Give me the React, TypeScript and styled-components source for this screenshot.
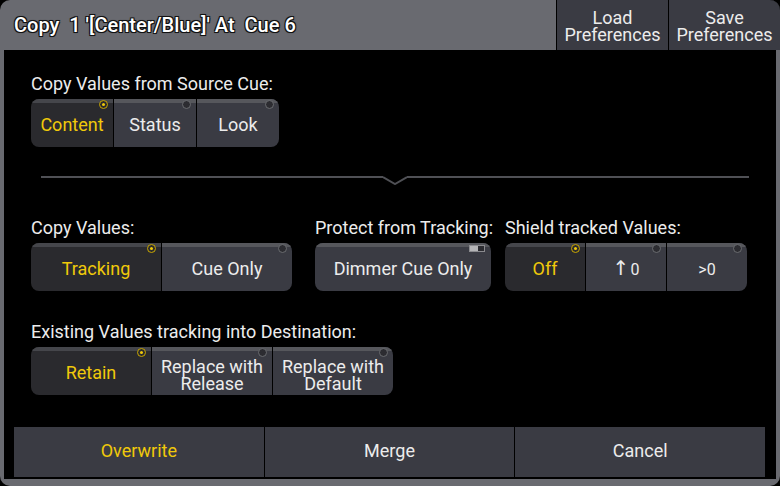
import React, { useState } from "react";
import styled, { createGlobalStyle } from "styled-components";

const YELLOW = "#f0c90a";

const GlobalStyle = createGlobalStyle`
  * {
    box-sizing: border-box;
  }
  html,
  body {
    margin: 0;
    padding: 0;
    background: #000;
    font-family: Roboto, "Liberation Sans", sans-serif;
    color: #ececec;
  }
`;

const Frame = styled.div`
  width: 780px;
  height: 486px;
  background: #696a70;
  border-radius: 10px;
  overflow: hidden;
  display: flex;
  flex-direction: column;
`;

const TitleBar = styled.div`
  height: 50px;
  display: flex;
  align-items: stretch;
  flex-shrink: 0;
`;

const Title = styled.div`
  flex: 1;
  padding-left: 14px;
  padding-bottom: 1px;
  display: flex;
  align-items: center;
  font-size: 20px;
  font-weight: 500;
  white-space: pre;
  color: #fff;
  text-shadow:
    -1px -1px 0 #111,
    1px -1px 0 #111,
    -1px 1px 0 #111,
    1px 1px 0 #111,
    0 0 2px #000;
`;

const TitleButtons = styled.div`
  display: flex;
  gap: 1px;
  background: #000;
  padding-left: 1px;
`;

const TitleButton = styled.div`
  width: 111px;
  background: #3a3b43;
  display: flex;
  align-items: center;
  justify-content: center;
  text-align: center;
  font-size: 18px;
  line-height: 17px;
  padding-top: 1px;
`;

const Body = styled.div`
  flex: 1;
  margin: 0 4px 7px;
  background: #000;
  display: flex;
  flex-direction: column;
`;

const Content = styled.div`
  padding: 24px 27px 0 27px;
  display: flex;
  flex-direction: column;
`;

const Field = styled.div<{ $width?: number }>`
  display: flex;
  flex-direction: column;
  width: ${p => (p.$width ? `${p.$width}px` : "auto")};
`;

const Label = styled.div`
  font-size: 18px;
  line-height: 20px;
  height: 20px;
  margin-bottom: 5px;
  white-space: nowrap;
`;

const Group = styled.div`
  display: flex;
  gap: 1px;
  background: #000;
  border-radius: 8px;
  overflow: hidden;
  align-self: flex-start;
`;

const Option = styled.div<{ $active: boolean; $width: number }>`
  position: relative;
  width: ${p => p.$width}px;
  height: 48px;
  background: ${p => (p.$active ? "#2a2a2e" : "#3a3b43")};
  box-shadow: inset 0 4px 0 ${p => (p.$active ? "#45464b" : "#56575c")};
  color: ${p => (p.$active ? YELLOW : "#ececec")};
  display: flex;
  align-items: center;
  justify-content: center;
  text-align: center;
  font-size: 18px;
  line-height: 17px;
  padding-top: 3px;
  cursor: pointer;
`;

const TwoLine = styled.span`
  display: block;
  padding-top: 5px;
`;

const Small = styled.span`
  font-size: 16px;
  padding-top: 2px;
  display: inline-flex;
  align-items: baseline;
`;

const Arrow = styled.span`
  font-family: "DejaVu Sans", sans-serif;
  font-size: 20px;
  line-height: 0;
  margin-right: 1px;
`;

const Radio = styled.span<{ $active: boolean }>`
  position: absolute;
  top: 1px;
  right: 5px;
  width: 9px;
  height: 9px;
  border-radius: 50%;
  border: 1.5px solid ${p => (p.$active ? "#c9a700" : "#6b6c71")};
  background: ${p => (p.$active ? "#2a2a2e" : "#2c2c31")};
  display: flex;
  align-items: center;
  justify-content: center;
  &::after {
    content: "";
    display: ${p => (p.$active ? "block" : "none")};
    width: 3px;
    height: 3px;
    border-radius: 50%;
    background: ${YELLOW};
  }
`;

const Toggle = styled.span`
  position: absolute;
  top: 2px;
  right: 6px;
  width: 16px;
  height: 7px;
  background: #b4b4b6;
  border: 1px solid #8a8a8e;
  display: flex;
  justify-content: flex-end;
  &::after {
    content: "";
    width: 6px;
    height: 100%;
    background: #2b2b30;
  }
`;

const DividerRow = styled.div`
  display: flex;
  align-items: flex-start;
  margin: 29px 0 0 10px;
  height: 8px;
`;

const DividerLine = styled.div`
  flex: 1;
  height: 2px;
  background: #4f5055;
`;

const Row = styled.div<{ $top: number }>`
  display: flex;
  margin-top: ${p => p.$top}px;
`;

const BottomBar = styled.div`
  margin: auto 11px 2px 10px;
  height: 50px;
  display: flex;
  gap: 1px;
  background: #000;
`;

const BottomButton = styled.div<{ $accent?: boolean }>`
  flex: 1;
  background: #3a3b43;
  color: ${p => (p.$accent ? YELLOW : "#ececec")};
  display: flex;
  align-items: center;
  justify-content: center;
  font-size: 18px;
  padding-bottom: 3px;
`;

type Opt = { id: string; label: React.ReactNode };

function OptionGroup({
  options,
  selected,
  width,
  onSelect
}: {
  options: Opt[];
  selected: string;
  width: number;
  onSelect: (id: string) => void;
}) {
  return (
    <Group>
      {options.map(o => (
        <Option
          key={o.id}
          $active={o.id === selected}
          $width={width}
          onClick={() => onSelect(o.id)}
        >
          <Radio $active={o.id === selected} />
          {o.label}
        </Option>
      ))}
    </Group>
  );
}

function App() {
  const [source, setSource] = useState("content");
  const [copyMode, setCopyMode] = useState("tracking");
  const [shield, setShield] = useState("off");
  const [existing, setExisting] = useState("retain");

  return (
    <>
      <GlobalStyle />
      <Frame>
        <TitleBar>
          <Title>{"Copy  1 '[Center/Blue]' At  Cue 6"}</Title>
          <TitleButtons>
            <TitleButton>
              Load
              <br />
              Preferences
            </TitleButton>
            <TitleButton>
              Save
              <br />
              Preferences
            </TitleButton>
          </TitleButtons>
        </TitleBar>
        <Body>
          <Content>
            <Field>
              <Label>Copy Values from Source Cue:</Label>
              <OptionGroup
                width={82}
                selected={source}
                onSelect={setSource}
                options={[
                  { id: "content", label: "Content" },
                  { id: "status", label: "Status" },
                  { id: "look", label: "Look" }
                ]}
              />
            </Field>

            <DividerRow>
              <DividerLine />
              <svg width="24" height="9" viewBox="0 0 24 9">
                <polyline
                  points="0,1 12,8 24,1"
                  fill="none"
                  stroke="#4f5055"
                  strokeWidth="2"
                />
              </svg>
              <DividerLine />
            </DividerRow>

            <Row $top={34}>
              <Field $width={284}>
                <Label>Copy Values:</Label>
                <OptionGroup
                  width={130}
                  selected={copyMode}
                  onSelect={setCopyMode}
                  options={[
                    { id: "tracking", label: "Tracking" },
                    { id: "cueonly", label: "Cue Only" }
                  ]}
                />
              </Field>
              <Field $width={190}>
                <Label>Protect from Tracking:</Label>
                <Group>
                  <Option $active={false} $width={176}>
                    <Toggle />
                    Dimmer Cue Only
                  </Option>
                </Group>
              </Field>
              <Field>
                <Label>Shield tracked Values:</Label>
                <OptionGroup
                  width={80}
                  selected={shield}
                  onSelect={setShield}
                  options={[
                    { id: "off", label: "Off" },
                    {
                      id: "up",
                      label: (
                        <Small>
                          <Arrow>↑</Arrow>0
                        </Small>
                      )
                    },
                    { id: "gt", label: <Small>&gt;0</Small> }
                  ]}
                />
              </Field>
            </Row>

            <Row $top={31}>
              <Field>
                <Label>Existing Values tracking into Destination:</Label>
                <OptionGroup
                  width={120}
                  selected={existing}
                  onSelect={setExisting}
                  options={[
                    { id: "retain", label: "Retain" },
                    {
                      id: "release",
                      label: (
                        <TwoLine>
                          Replace with
                          <br />
                          Release
                        </TwoLine>
                      )
                    },
                    {
                      id: "default",
                      label: (
                        <TwoLine>
                          Replace with
                          <br />
                          Default
                        </TwoLine>
                      )
                    }
                  ]}
                />
              </Field>
            </Row>
          </Content>

          <BottomBar>
            <BottomButton $accent>Overwrite</BottomButton>
            <BottomButton>Merge</BottomButton>
            <BottomButton>Cancel</BottomButton>
          </BottomBar>
        </Body>
      </Frame>
    </>
  );
}

export default App;
